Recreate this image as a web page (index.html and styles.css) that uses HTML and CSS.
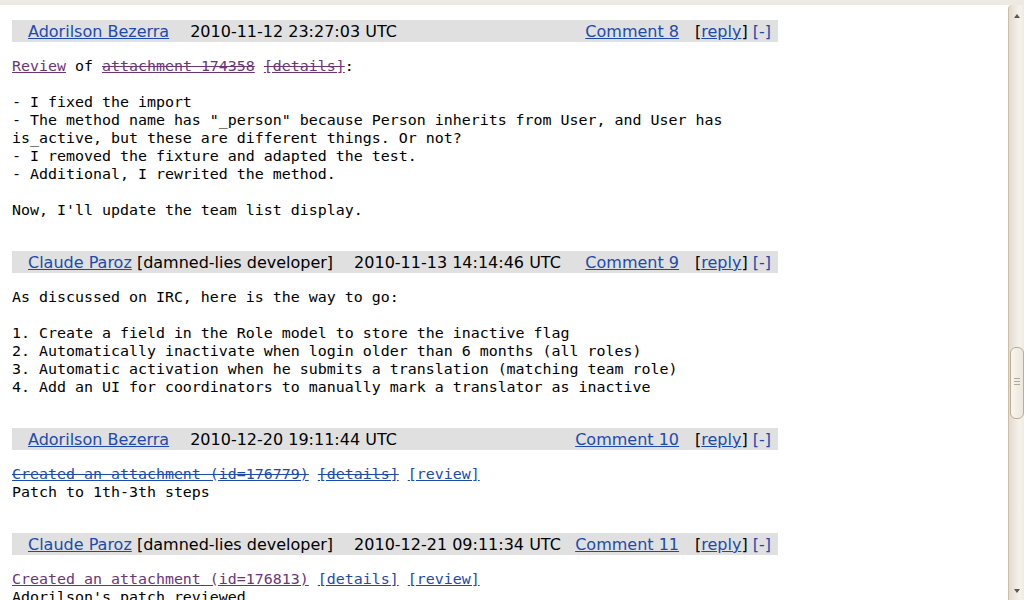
FILE: index.html
```html
<!DOCTYPE html>
<html>
<head>
<meta charset="utf-8">
<title>Bug comments</title>
<link rel="stylesheet" href="styles.css">
</head>
<body>
<div class="strip"></div>
<div class="frame">
  <div class="page">
    <div class="comments">
      <div class="comment">
        <div class="head">
          <a class="user" href="#">Adorilson Bezerra</a>
          <span class="time">2010-11-12 23:27:03 UTC</span>
          <a class="num" href="#">Comment 8</a>
          <span class="acts">[<a href="#">reply</a>] <a href="#">[-]</a></span>
        </div>
<pre class="text"><a class="visited" href="#">Review</a> of <a class="visited obsolete" href="#">attachment 174358</a> <a class="visited obsolete" href="#">[details]</a>:

- I fixed the import
- The method name has "_person" because Person inherits from User, and User has
is_active, but these are different things. Or not?
- I removed the fixture and adapted the test.
- Additional, I rewrited the method.

Now, I'll update the team list display.</pre>
      </div>
      <div class="comment">
        <div class="head">
          <a class="user" href="#">Claude Paroz</a><span class="role">&nbsp;[damned-lies developer]</span>
          <span class="time">2010-11-13 14:14:46 UTC</span>
          <a class="num" href="#">Comment 9</a>
          <span class="acts">[<a href="#">reply</a>] <a href="#">[-]</a></span>
        </div>
<pre class="text">As discussed on IRC, here is the way to go:

1. Create a field in the Role model to store the inactive flag
2. Automatically inactivate when login older than 6 months (all roles)
3. Automatic activation when he submits a translation (matching team role)
4. Add an UI for coordinators to manually mark a translator as inactive</pre>
      </div>
      <div class="comment">
        <div class="head">
          <a class="user" href="#">Adorilson Bezerra</a>
          <span class="time">2010-12-20 19:11:44 UTC</span>
          <a class="num" href="#">Comment 10</a>
          <span class="acts">[<a href="#">reply</a>] <a href="#">[-]</a></span>
        </div>
<pre class="text"><a class="obsolete" href="#">Created an attachment (id=176779)</a> <a class="obsolete" href="#">[details]</a> <a href="#">[review]</a>
Patch to 1th-3th steps</pre>
      </div>
      <div class="comment">
        <div class="head">
          <a class="user" href="#">Claude Paroz</a><span class="role">&nbsp;[damned-lies developer]</span>
          <span class="time">2010-12-21 09:11:34 UTC</span>
          <a class="num" href="#">Comment 11</a>
          <span class="acts">[<a href="#">reply</a>] <a href="#">[-]</a></span>
        </div>
<pre class="text"><a class="visited" href="#">Created an attachment (id=176813)</a> <a href="#">[details]</a> <a href="#">[review]</a>
Adorilson's patch reviewed</pre>
      </div>
    </div>
  </div>
  <div class="scrollbar">
    <span class="arrow-up"></span>
    <span class="thumb"><span class="grip"></span></span>
    <span class="arrow-down"></span>
  </div>
</div>
</body>
</html>
```
FILE: styles.css
```css
html, body {
  margin: 0;
  padding: 0;
  height: 600px;
  overflow: hidden;
  background: #ffffff;
}
body {
  display: flex;
  flex-direction: column;
  font-family: "DejaVu Sans", sans-serif;
}
.strip {
  height: 5px;
  background: #edeae4;
  flex: none;
}
.frame {
  flex: 1;
  display: flex;
  min-height: 0;
}
.page {
  flex: 1;
  overflow: hidden;
  background: #ffffff;
}
.comments {
  width: 766px;
  padding: 15px 0 0 12px;
}
.comment {
  margin-bottom: 32px;
}
.head {
  display: flex;
  align-items: center;
  box-sizing: border-box;
  height: 22px;
  line-height: 21px;
  padding: 1px 7px 0 16px;
  background: #e0e0e0;
  font-size: 16px;
  color: #000000;
  white-space: nowrap;
}
a {
  color: #1d4aad;
  text-decoration: underline;
}
a.visited {
  color: #6c3577;
}
a.obsolete {
  text-decoration: line-through underline;
}
.time {
  margin-left: 21px;
}
.num {
  margin-left: auto;
}
.acts {
  margin-left: 16px;
}
.acts a:last-child {
  text-decoration: none;
}
.text {
  margin: 15px 0 0 0;
  font-family: "DejaVu Sans Mono", monospace;
  font-size: 14.95px;
  line-height: 18px;
  color: #000000;
  white-space: pre;
}
.scrollbar {
  position: relative;
  width: 15px;
  flex: none;
  border-left: 1px solid #cbbfaa;
  background: linear-gradient(to right, #e3dbcd, #f5f2ed 70%, #efebe4);
  border-radius: 4px 0 0 0;
}
.arrow-up {
  position: absolute;
  left: 5px;
  top: 9px;
  width: 0;
  height: 0;
  border-left: 3px solid transparent;
  border-right: 3px solid transparent;
  border-bottom: 4px solid #5a5752;
}
.arrow-down {
  position: absolute;
  left: 5px;
  bottom: 7px;
  width: 0;
  height: 0;
  border-left: 3px solid transparent;
  border-right: 3px solid transparent;
  border-top: 4px solid #5a5752;
}
.thumb {
  position: absolute;
  left: 1px;
  top: 342px;
  width: 12px;
  height: 70px;
  border: 1px solid #bcac92;
  border-radius: 6px;
  background: linear-gradient(to right, #f8f6f2, #ece6dc);
}
.grip {
  position: absolute;
  left: 3px;
  top: 30px;
  width: 6px;
  height: 5px;
  border-top: 1px solid #b2a794;
  border-bottom: 1px solid #b2a794;
}
.grip::after {
  content: "";
  position: absolute;
  left: 0;
  top: 2px;
  width: 6px;
  height: 1px;
  background: #b2a794;
}
```
